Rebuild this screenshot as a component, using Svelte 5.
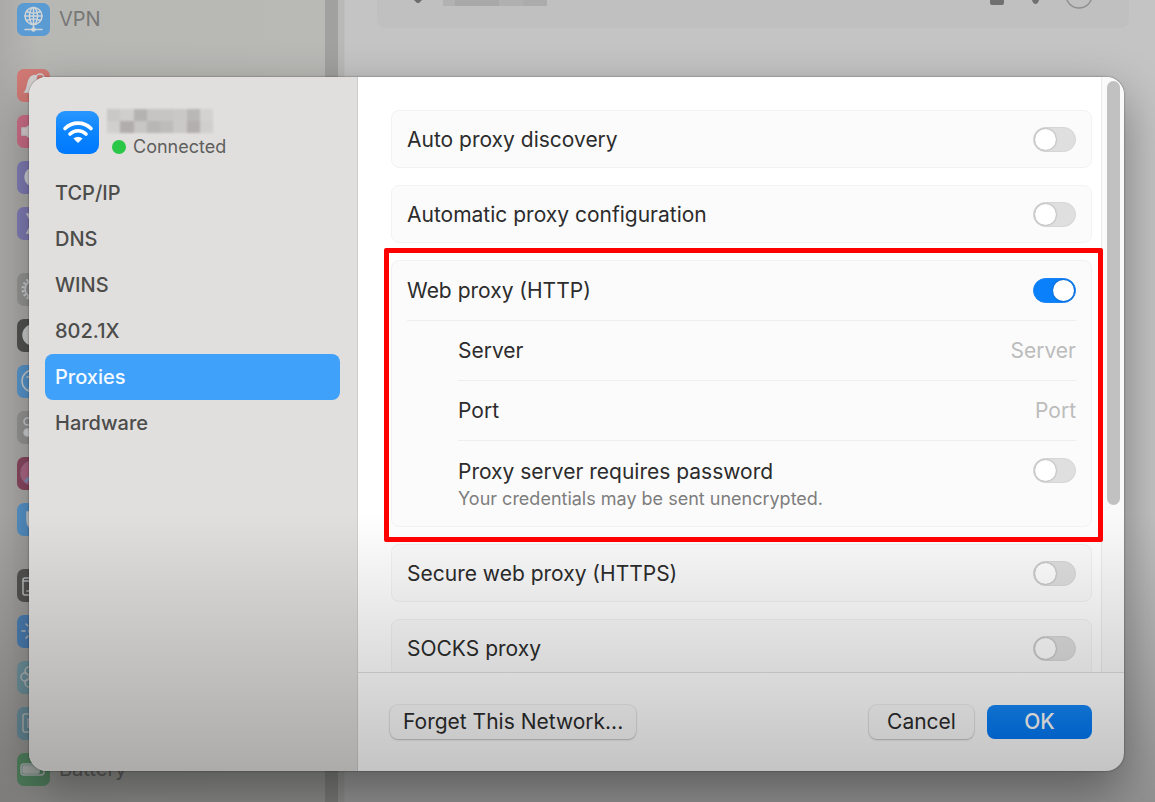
<script>
  let current = $state('Proxies');
  let autoDiscovery = $state(false);
  let autoConfig = $state(false);
  let webProxy = $state(true);
  let needsPassword = $state(false);
  let secureProxy = $state(false);
  let socksProxy = $state(false);
  let server = $state('');
  let port = $state('');

  const tabs = ['TCP/IP', 'DNS', 'WINS', '802.1X', 'Proxies', 'Hardware'];

  const groups = [
    [{ id: 'vpn', label: 'VPN', color: '#5a9bd3' }],
    [
      { id: 'bell', color: '#d37a76' },
      { id: 'sound', color: '#d0708a' },
      { id: 'focus', color: '#8480bb' },
      { id: 'hourglass', color: '#8480bb' },
    ],
    [
      { id: 'gear', color: '#9a9a99' },
      { id: 'contrast', color: '#555554' },
      { id: 'access', color: '#5a9bd3' },
      { id: 'control', color: '#9a9a99' },
      { id: 'siri', color: '#8f4a63' },
      { id: 'hand', color: '#5a9bd3' },
    ],
    [
      { id: 'dock', color: '#5f5e5d' },
      { id: 'sun', color: '#558fcb' },
      { id: 'flower', color: '#7fa9b5' },
      { id: 'screen', color: '#7aa5b5' },
      { id: 'battery', label: 'Battery', color: '#66a377' },
    ],
  ];

  // blurred network name, two rows of eight blocks
  const mosaic = [
    '#c9c8c7', '#cfcecd', '#b5b3b2', '#c6c5c4', '#c6c5c4', '#c9c8c7', '#b9b8b7', '#d3d2d1',
    '#d0cfce', '#b1adac', '#c8c6c5', '#b9b7b6', '#bebcbb', '#cac9c8', '#b3afae', '#d0cfce',
  ];
</script>

{#snippet glyph(id)}
  <svg viewBox="0 0 33 33" fill="none" stroke="#d0d4d6" stroke-width="1.5" stroke-linecap="round">
    {#if id === 'vpn'}
      <circle cx="16.5" cy="13" r="8.5" />
      <ellipse cx="16.5" cy="13" rx="4" ry="8.5" />
      <path d="M8 13h17M16.5 4.500v22M9.500 8.500c4 2 10 2 14 0M9.500 17.500c4-2 10-2 14 0M8 26.500h17" />
      <circle cx="16.500" cy="26.500" r="1.500" fill="#d9dcdd" />
    {:else if id === 'bell'}
      <path fill="#d9d4d2" d="M8 23c3-3 2-8 4-12 2-5 8-6 9-2 3 4 0 9 4 14z" />
      <circle cx="23" cy="9" r="4" fill="#d37a76" />
    {:else if id === 'sound'}
      <path fill="#dfd3d5" d="M5 13h4l8-6v19l-8-6H5z" />
    {:else if id === 'focus'}
      <circle cx="17" cy="16" r="9" fill="#d5d4df" />
    {:else if id === 'hourglass'}
      <path fill="#d5d4df" d="M10 7h13l-5 9 5 10H10l5-10z" />
    {:else if id === 'gear'}
      <circle cx="16" cy="16" r="10" stroke-dasharray="2 2" stroke-width="3" stroke-linecap="butt" />
      <circle cx="16" cy="16" r="8" />
    {:else if id === 'contrast'}
      <circle cx="16" cy="16" r="10" fill="#d3d3d2" />
    {:else if id === 'access'}
      <circle cx="16" cy="16" r="11" />
      <path d="M10 12h12M16 13v5l-4 6M16 18l4 6" />
    {:else if id === 'control'}
      <rect x="7" y="7" width="19" height="7" rx="3.500" />
      <rect x="7" y="18" width="19" height="7" rx="3.500" fill="#d9dcdd" />
    {:else if id === 'siri'}
      <circle cx="16" cy="16" r="12" fill="#b56a8b" stroke="#a6718f" />
      <path d="M9 24c4-5 10-5 16-2" stroke="#8297bd" stroke-width="3" />
    {:else if id === 'hand'}
      <path fill="#d9dcdd" d="M10 9v8c0 6 3 9 8 9s7-4 7-9V9h-3v6h-9V9z" />
    {:else if id === 'dock'}
      <rect x="6" y="9" width="21" height="17" rx="2" />
      <path d="M6 12h21M10 22h2M15 22h2" />
    {:else if id === 'sun'}
      <circle cx="16" cy="16" r="4" fill="#d9dcdd" />
      <path d="M5 16h3M24 16h3M16 5v3M16 24v3M9 9l2 2M9 23l2-2M23 9l-2 2M23 23l-2-2" />
    {:else if id === 'flower'}
      <circle cx="8" cy="16" r="4" /><circle cx="12" cy="10" r="4" /><circle cx="20" cy="10" r="4" />
      <circle cx="24" cy="16" r="4" /><circle cx="12" cy="22" r="4" /><circle cx="20" cy="22" r="4" />
    {:else if id === 'screen'}
      <rect x="6" y="7" width="20" height="18" rx="2" />
      <rect x="11" y="12" width="10" height="8" />
    {:else}
      <rect x="4" y="11" width="23" height="11" rx="3" />
      <rect x="6" y="13" width="16" height="7" rx="1" fill="#cfd6d1" />
    {/if}
  </svg>
{/snippet}

<div class="desktop">
  <aside class="back-side">
    {#each groups as group}
      <ul>
        {#each group as item}
          <li>
            <span class="tile" style:background={item.color}>{@render glyph(item.id)}</span>
            {#if item.label}<span>{item.label}</span>{/if}
          </li>
        {/each}
      </ul>
    {/each}
  </aside>
  <div class="back-scroll"></div>
  <main class="back-main">
    <div class="back-card">
      <svg class="tip" width="10" height="3" viewBox="0 0 10 3"><path fill="#6d6d6d" d="M1 0h8L6 3H4z" /></svg>
      <span class="smudge"></span>
      <svg width="104" height="10" viewBox="0 0 104 10">
        <rect x="1" y="-4" width="14" height="9" rx="2" fill="#707070" />
        <path fill="#707070" d="M43 0h7q-1 4-3.500 4T43 0z" />
        <circle cx="90" cy="-5" r="13" fill="none" stroke="#8f8f8f" stroke-width="1.500" />
      </svg>
    </div>
  </main>

  <div class="overlay">
    <div class="sheet" role="dialog" aria-label="Network details">
      <div class="side">
        <div class="network">
          <svg class="wifi" viewBox="0 0 44 44">
            <defs>
              <linearGradient id="wifibg" x1="0" y1="0" x2="0" y2="1">
                <stop offset="0" stop-color="#2a97ff" />
                <stop offset=".5" stop-color="#0a84ff" />
                <stop offset="1" stop-color="#0079fd" />
              </linearGradient>
            </defs>
            <rect width="43" height="43" rx="9" fill="url(#wifibg)" />
            <g fill="none" stroke="#fff" stroke-width="3.600" stroke-linecap="round">
              <path d="M9 17.500a18.500 18.500 0 0 1 26 0" />
              <path d="M14 23a11.300 11.300 0 0 1 16 0" />
            </g>
            <path fill="#fff" stroke="#fff" stroke-linejoin="round" d="M18 27.500q4-2.500 8 0l-4 4z" />
          </svg>
          <div class="who">
            <div class="mosaic" aria-hidden="true">
              {#each mosaic as color}<i style:background={color}></i>{/each}
            </div>
            <div class="status"><span class="dot"></span>Connected</div>
          </div>
        </div>
        <nav>
          {#each tabs as tab}
            <button class="tab" class:active={tab === current} onclick={() => (current = tab)}>{tab}</button>
          {/each}
        </nav>
      </div>

      <div class="pane">
        <div class="body">
          <div class="cards">
            <section class="card">
              <label class="row">Auto proxy discovery
                <input type="checkbox" class="switch" bind:checked={autoDiscovery} />
              </label>
            </section>
            <section class="card">
              <label class="row">Automatic proxy configuration
                <input type="checkbox" class="switch" bind:checked={autoConfig} />
              </label>
            </section>
            <section class="card marked">
              <label class="row tall">Web proxy (HTTP)
                <input type="checkbox" class="switch" bind:checked={webProxy} />
              </label>
              <label class="row tall sub">Server
                <input type="text" placeholder="Server" bind:value={server} />
              </label>
              <label class="row tall sub">Port
                <input type="text" placeholder="Port" bind:value={port} />
              </label>
              <label class="row sub last">
                <span>Proxy server requires password
                  <small>Your credentials may be sent unencrypted.</small>
                </span>
                <input type="checkbox" class="switch" bind:checked={needsPassword} />
              </label>
            </section>
            <section class="card">
              <label class="row">Secure web proxy (HTTPS)
                <input type="checkbox" class="switch" bind:checked={secureProxy} />
              </label>
            </section>
            <section class="card">
              <label class="row">SOCKS proxy
                <input type="checkbox" class="switch" bind:checked={socksProxy} />
              </label>
            </section>
          </div>
          <div class="track"><div class="thumb"></div></div>
        </div>
        <footer>
          <button class="btn">Forget This Network...</button>
          <span class="spacer"></span>
          <button class="btn">Cancel</button>
          <button class="btn primary">OK</button>
        </footer>
      </div>
    </div>
  </div>
  <div class="fade"></div>
</div>

<style>
  .desktop { position: relative; display: flex; height: 100vh; overflow: hidden; background: #c4c4c4;
             font-family: Inter, "Liberation Sans", sans-serif; font-size: 20px; color: #2c2c2c; }
  .desktop * { box-sizing: border-box; }
  button, input { font: inherit; color: inherit; }

  /* dimmed settings window behind the sheet */
  .back-side { flex: 0 0 325px; background: linear-gradient(90deg, #acaaa8, #b7b7b4 40px, #b9b9b6); color: #777775; }
  .back-side ul { list-style: none; margin: 0 0 20px; padding: 0 17px; }
  .back-side ul:first-child { margin-top: -4px; }
  .back-side li { display: flex; align-items: center; gap: 9px; height: 46px; }
  .tile { width: 33px; height: 33px; border-radius: 7px; overflow: hidden; }
  .tile svg { display: block; width: 33px; height: 33px; }
  .back-scroll { flex: 0 0 20px; background: #b9b9b8; border-left: 13px solid #a1a1a0; border-right: 1px solid #bfbfbf; }
  .back-main { flex: 1; padding: 0 26px 0 32px; }
  .back-card { display: flex; align-items: flex-start; height: 28px; padding: 0 36px; border-radius: 0 0 8px 8px; background: #c0c0c0; }
  .smudge { width: 104px; height: 6px; margin: 0 auto 0 20px;
            background: linear-gradient(90deg, #b2b2b2 12px, #a8a8a8 12px 56px, #b0b0b0 56px 80px, #acacac 80px); }

  .overlay { position: absolute; inset: 0; display: flex; padding: 77px 31px 31px 29px; }
  .sheet { flex: 1; display: flex; min-width: 0; border-radius: 18px; overflow: hidden; background: #fff;
           box-shadow: 0 0 2px rgba(0, 0, 0, .5), 0 20px 50px rgba(0, 0, 0, .4); }

  .side { flex: 0 0 329px; padding: 32px 17px 0 16px; background: #e0dfdd; border-right: 1px solid #cfcecc; font-weight: 500; }
  .network { display: flex; align-items: flex-start; gap: 7px; height: 61px; padding-left: 11px; }
  .wifi { width: 44px; height: 44px; margin-top: 2px; }
  .mosaic { display: grid; grid-template-columns: repeat(8, 1fr); width: 106px; height: 24px; filter: blur(1px); }
  .status { display: flex; align-items: center; gap: 7px; padding-left: 5px; line-height: 28px;
            font-size: 18px; font-weight: 400; color: #5e5e5d; }
  .dot { width: 14px; height: 14px; border-radius: 50%; background: #2ac748; }
  .tab { display: block; width: 100%; height: 46px; padding: 0 10px; border: 0; border-radius: 8px;
         background: none; text-align: left; color: #4c4c4b; }
  .tab.active { background: #40a1fb; color: #f4faff; }

  .pane { flex: 1; display: flex; flex-direction: column; min-width: 0; font-size: 21px; }
  .body { flex: 1; display: flex; min-height: 0; overflow: hidden; }
  .cards { flex: 1; display: flex; flex-direction: column; gap: 17px; padding: 33px 9px 0 33px; }
  .card { position: relative; flex: none; padding: 0 15px; border: 1px solid #f2f2f2; border-radius: 8px; background: #fbfbfb; }
  .row { display: flex; align-items: center; justify-content: space-between; height: 56px; }
  .row.tall { height: 60px; border-bottom: 1px solid #eee; }
  .row.sub { margin-left: 51px; }
  .row.last { align-items: flex-start; height: 85px; padding-top: 17px; }
  .row span { line-height: 28px; }
  small { display: block; font-size: 18px; line-height: 26px; color: #7e7e7e; }
  .marked { z-index: 1; }
  .marked::after { content: ''; position: absolute; inset: -13px -12px -16px -8px;
                   border: 5px solid #f00; border-radius: 2px; pointer-events: none; }

  .row input[type="text"] { width: 300px; padding: 0; border: 0; outline: 0; background: none; text-align: right; }
  .row input::placeholder { color: #bcbcbc; opacity: 1; }
  .switch { appearance: none; display: flex; flex: none; width: 43px; height: 25px; margin: 0; padding: 1px;
            border: 1px solid #d6d6d6; border-radius: 13px; background: #dfdfdf; }
  .switch::before { content: ''; width: 21px; height: 21px; border-radius: 50%; background: #fff;
                    box-shadow: 0 0 2px rgba(0, 0, 0, .4); }
  .switch:checked { justify-content: flex-end; border-color: #1a84f5; background: #0a80fb; }

  .track { flex: 0 0 23px; padding: 4px 4px 0 5px; border-left: 1px solid #ebebeb; background: #fafafa; }
  .thumb { height: 424px; border-radius: 7px; background: #c1c1c1; }

  footer { display: flex; align-items: center; gap: 13px; flex: 0 0 99px; padding: 0 32px; border-top: 1px solid #e0e0e0; }
  .spacer { flex: 1; }
  .btn { min-width: 105px; height: 34px; padding: 0 13px; border: 0; border-radius: 8px; background: #fdfdfd;
         line-height: 34px; box-shadow: 0 0 1px 1px rgba(0, 0, 0, .06), 0 1px 2px rgba(0, 0, 0, .2); }
  .btn.primary { background: linear-gradient(#1589fa, #0078f8); color: #fff; font-weight: 500; box-shadow: none; }

  /* everything darkens towards the bottom edge */
  .fade { position: absolute; inset: 0; pointer-events: none;
          background: linear-gradient(transparent 64%, rgba(0, 0, 0, .26)); }
</style>
